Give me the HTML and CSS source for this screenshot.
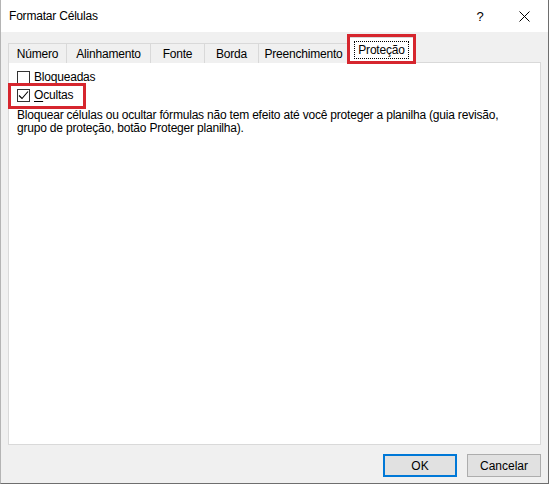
FILE: index.html
```html
<!DOCTYPE html>
<html lang="pt-BR">
<head>
  <meta charset="UTF-8">
  <title>Formatar Células</title>
  <link rel="stylesheet" href="styles.css">
</head>
<body>
  <div class="dialog">
    <div class="titlebar">
      <span class="title">Formatar Células</span>
      <span class="help">?</span>
      <span class="close">
        <svg width="11" height="11" viewBox="0 0 11 11"><path d="M0.5 0.5 L10.5 10.5 M10.5 0.5 L0.5 10.5" stroke="#000" stroke-width="1" fill="none"/></svg>
      </span>
    </div>

    <div class="content">
      <div class="tabs">
        <div class="tab w-numero">Número</div>
        <div class="tab w-alinh">Alinhamento</div>
        <div class="tab w-fonte">Fonte</div>
        <div class="tab w-borda">Borda</div>
        <div class="tab w-preen">Preenchimento</div>
        <div class="tab active marked"><span class="focus">Proteção</span></div>
      </div>

      <div class="panel">
        <label class="check">
          <span class="box"></span>
          <span><u>B</u>loqueadas</span>
        </label>
        <label class="check marked-row">
          <span class="box">
            <svg width="11" height="11" viewBox="0 0 11 11"><path d="M1 5.5 L4 8.5 L10 1.5" stroke="#000" stroke-width="1.1" fill="none"/></svg>
          </span>
          <span><u>O</u>cultas</span>
        </label>
        <p class="note">Bloquear células ou ocultar fórmulas não tem efeito até você proteger a planilha (guia revisão, grupo de proteção, botão Proteger planilha).</p>
      </div>

      <div class="buttons">
        <button class="btn default">OK</button>
        <button class="btn">Cancelar</button>
      </div>
    </div>
  </div>
</body>
</html>
```

FILE: styles.css
```css
* {
  box-sizing: border-box;
}
html, body {
  margin: 0;
  padding: 0;
}
body {
  font-family: "Liberation Sans", Arial, sans-serif;
  font-size: 12px;
  letter-spacing: -0.2px;
  color: #000;
  background: #fff;
}

.dialog {
  width: 549px;
  height: 484px;
  display: flex;
  flex-direction: column;
  border-left: 1px solid #b4b4b4;
  border-right: 1px solid #6e6e6e;
  border-bottom: 1px solid #6e6e6e;
}

/* title bar */
.titlebar {
  height: 32px;
  background: #fff;
  display: flex;
  align-items: center;
  padding-left: 8px;
}
.title {
  flex: 1;
  font-size: 12px;
}
.help {
  width: 14px;
  font-size: 13px;
  margin-right: 32px;
  text-align: center;
}
.close {
  display: flex;
  margin-right: 18px;
}

/* dialog body */
.content {
  flex: 1;
  background: #f0f0f0;
  display: flex;
  flex-direction: column;
  padding: 11px 7px 0 7px;
}

.tabs {
  display: flex;
  align-items: flex-end;
  height: 20px;
  margin-bottom: -1px;
  position: relative;
  z-index: 1;
}
.tab {
  height: 20px;
  border: 1px solid #d9d9d9;
  border-bottom: none;
  margin-right: -1px;
  display: flex;
  align-items: center;
  justify-content: center;
  background: #f0f0f0;
}
.w-numero { width: 59px; }
.w-alinh { width: 85px; }
.w-fonte { width: 55px; }
.w-borda { width: 55px; }
.w-preen { width: 91px; }

.tab.active {
  height: 26px;
  width: 65px;
  background: #fff;
  margin: 0 -2px 0 1px;
  position: relative;
  padding-bottom: 1px;
}
.focus {
  outline: 1px dotted #000;
  padding: 1px 3px;
}

/* red highlight frames */
.marked::after,
.marked-row::after {
  content: "";
  position: absolute;
  border: 3px solid #d6262e;
  pointer-events: none;
}
.marked::after {
  top: -4px;
  left: -3px;
  right: -3px;
  bottom: -1px;
}

.panel {
  flex: 1;
  background: #fff;
  border: 1px solid #d9d9d9;
  padding: 5px 8px;
}

.check {
  display: flex;
  align-items: center;
  gap: 4px;
  height: 18px;
  width: max-content;
  position: relative;
}
.check u {
  text-decoration-thickness: 1px;
  text-underline-offset: 2px;
}
.box {
  width: 13px;
  height: 13px;
  border: 1px solid #333;
  background: #fff;
  display: flex;
  align-items: center;
  justify-content: center;
}
.marked-row::after {
  top: -3px;
  left: -9px;
  right: -13px;
  bottom: -5px;
}

.note {
  max-width: 500px;
  margin: 5px 0 0 0;
  line-height: 13px;
}

.buttons {
  display: flex;
  justify-content: flex-end;
  gap: 10px;
  padding: 9px 0 6px 0;
}
.btn {
  width: 74px;
  height: 23px;
  font-family: inherit;
  font-size: 12px;
  letter-spacing: 0;
  background: #e1e1e1;
  border: 1px solid #adadad;
  color: #000;
  padding: 0;
}
.btn.default {
  border: 2px solid #0078d7;
}
```
